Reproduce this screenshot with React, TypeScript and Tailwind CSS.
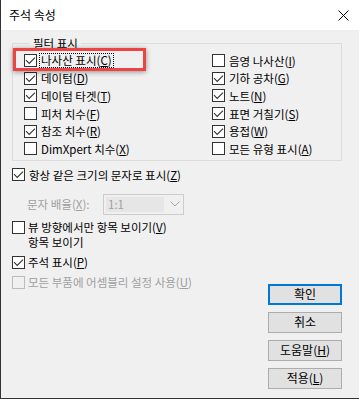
import React from "react";

const Check = ({ checked, disabled }: { checked?: boolean; disabled?: boolean }) => (
  <span
    className={`w-[13px] h-[13px] shrink-0 border flex items-center justify-center ${
      disabled ? "border-[#bcbcbc] bg-[#f0f0f0]" : "border-[#333333] bg-white"
    }`}
  >
    {checked && (
      <svg width="11" height="11" viewBox="0 0 11 11">
        <path d="M1 5.2 L4.2 8.4 L10 2.6" fill="none" stroke="#333333" strokeWidth="1.1" />
      </svg>
    )}
  </span>
);

const Lbl = ({ text, k }: { text: string; k: string }) => (
  <>
    {text}(<u className="underline-offset-[1px]">{k}</u>)
  </>
);

const Row = ({ checked, text, k, focus }: { checked?: boolean; text: string; k: string; focus?: boolean }) => (
  <div className="flex items-center gap-[4px] h-[17.6px]">
    <Check checked={checked} />
    {focus ? (
      <span className="-ml-[2px] border border-dotted border-black px-[1px] leading-[13px] whitespace-nowrap">
        <Lbl text={text} k={k} />
      </span>
    ) : (
      <span className="leading-[14px] whitespace-nowrap">
        <Lbl text={text} k={k} />
      </span>
    )}
  </div>
);

const Btn = ({ children, primary }: { children: React.ReactNode; primary?: boolean }) => (
  <div
    className={`w-[74px] h-[21px] flex items-center justify-center bg-[#e1e1e1] text-[12px] leading-none ${
      primary ? "border-2 border-[#0078d7]" : "border border-[#adadad]"
    }`}
  >
    {children}
  </div>
);

export default function App() {
  return (
    <div className="relative w-[359px] h-[399px] flex flex-col border-l border-b border-[#333333] bg-[#f0f0f0] text-[11.5px] text-black font-['Noto_Sans_CJK_KR','Noto_Sans',sans-serif]">
      {/* Title bar */}
      <div className="h-[30px] shrink-0 bg-white flex items-center justify-between pl-[8px] pr-[10px]">
        <span className="text-[12px] leading-none">주석 속성</span>
        <svg width="11" height="11" viewBox="0 0 11 11">
          <path d="M0.5 0.5 L10.5 10.5 M10.5 0.5 L0.5 10.5" stroke="#000" strokeWidth="1" />
        </svg>
      </div>

      {/* Body */}
      <div className="flex-1 flex flex-col pl-[11px] pr-[17px] pt-[5px]">
        <fieldset className="border border-[#dcdcdc] pl-[11px] pt-[1px] pb-[2px]">
          <legend className="ml-[6px] px-[3px] leading-[16px]">필터 표시</legend>
          <div className="grid grid-cols-[188px_1fr]">
            <Row checked text="나사산 표시" k="C" focus />
            <Row text="음영 나사산" k="I" />
            <Row checked text="데이텀" k="D" />
            <Row checked text="기하 공차" k="G" />
            <Row checked text="데이텀 타겟" k="T" />
            <Row checked text="노트" k="N" />
            <Row text="피처 치수" k="F" />
            <Row checked text="표면 거칠기" k="S" />
            <Row checked text="참조 치수" k="R" />
            <Row checked text="용접" k="W" />
            <Row text="DimXpert 치수" k="X" />
            <Row text="모든 유형 표시" k="A" />
          </div>
        </fieldset>

        <div className="flex justify-between">
          <div className="flex flex-col pt-[5px]">
            <div className="flex items-center gap-[4px] h-[18px]">
              <Check checked />
              <span className="leading-[14px] whitespace-nowrap">
                <Lbl text="항상 같은 크기의 문자로 표시" k="Z" />
              </span>
            </div>

            <div className="flex items-center h-[21px] mt-[10px]">
              <span className="w-[91px] pl-[15px] text-[#a0a0a0] whitespace-nowrap leading-[14px]">
                문자 배율(<u>X</u>):
              </span>
              <div className="w-[81px] h-[21px] border border-[#cccccc] bg-[#f0f0f0] flex items-center pl-[2px]">
                <div className="w-[58px] h-[15px] bg-[#e6e6e6] text-[#a0a0a0] pl-[2px] leading-[15px]">1:1</div>
                <svg className="ml-[6px]" width="10" height="6" viewBox="0 0 10 6">
                  <path d="M0.5 0.5 L5 5 L9.5 0.5" fill="none" stroke="#a8a8a8" strokeWidth="1" />
                </svg>
              </div>
            </div>

            <div className="flex items-start gap-[3px] mt-[5px]">
              <span className="mt-[1.5px]">
                <Check />
              </span>
              <div className="flex flex-col leading-[15px] whitespace-nowrap">
                <span>
                  <Lbl text="뷰 방향에서만 항목 보이기" k="V" />
                </span>
                <span>항목 보이기</span>
              </div>
            </div>

            <div className="flex items-center gap-[3px] h-[18px] mt-[3.5px]">
              <Check checked />
              <span className="leading-[14px] whitespace-nowrap">
                <Lbl text="주석 표시" k="P" />
              </span>
            </div>

            <div className="flex items-center gap-[3px] h-[18px] mt-[2px]">
              <Check disabled />
              <span className="leading-[14px] whitespace-nowrap text-[#a0a0a0]">
                <Lbl text="모든 부품에 어셈블리 설정 사용" k="U" />
              </span>
            </div>
          </div>

          <div className="flex flex-col gap-[7px] pt-[123px]">
            <Btn primary>확인</Btn>
            <Btn>취소</Btn>
            <Btn>
              <Lbl text="도움말" k="H" />
            </Btn>
            <Btn>
              <Lbl text="적용" k="L" />
            </Btn>
          </div>
        </div>
      </div>

      {/* Red highlight annotation */}
      <div className="absolute left-[12px] top-[48px] w-[133px] h-[23px] border-[3px] border-[#ee4343] shadow-[0_1px_5px_rgba(0,0,0,0.4)] pointer-events-none" />
    </div>
  );
}
